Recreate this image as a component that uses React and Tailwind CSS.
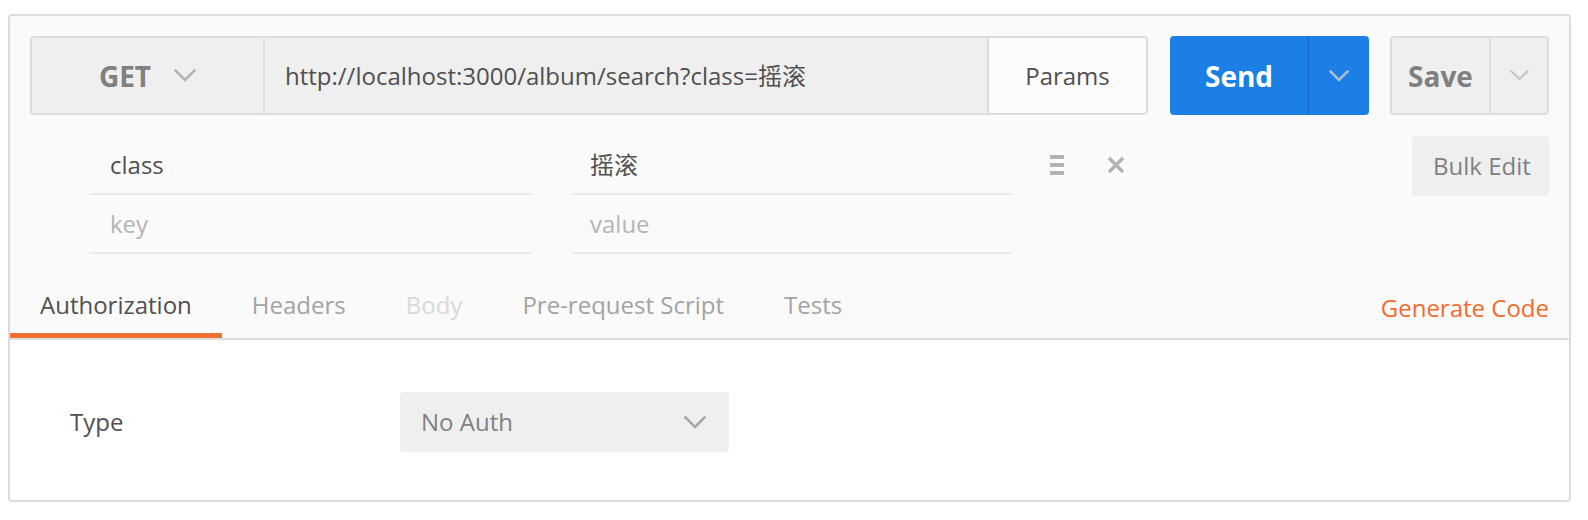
import React from 'react';

const Chevron = ({ className = '', color = '#b3b3b3', w = 22, h = 13, stroke = 2.5 }) => (
  <svg width={w} height={h} viewBox={`0 0 ${w} ${h}`} className={className} fill="none">
    <polyline
      points={`1.5,1.5 ${w / 2},${h - 2} ${w - 1.5},1.5`}
      stroke={color}
      strokeWidth={stroke}
      strokeLinecap="square"
      strokeLinejoin="miter"
    />
  </svg>
);

const tabs = [
  { label: 'Authorization', cls: 'text-[#505050] border-[#f2702f]' },
  { label: 'Headers', cls: 'text-[#a3a3a3] border-transparent' },
  { label: 'Body', cls: 'text-[#d9d9d9] border-transparent' },
  { label: 'Pre-request Script', cls: 'text-[#a3a3a3] border-transparent' },
  { label: 'Tests', cls: 'text-[#a3a3a3] border-transparent' },
];

const App = () => {
  return (
    <div className="w-[1588px] h-[520px] bg-white pt-[14px] pl-[8px] font-['Open_Sans','Noto_Sans_CJK_SC',sans-serif]">
      <div className="w-[1563px] h-[488px] border-2 border-[#dddddd] rounded-[4px] bg-[#fafafa] flex flex-col overflow-hidden">
        <div className="px-[20px] pt-[20px]">
          {/* request bar */}
          <div className="flex h-[79px]">
            <div className="flex w-[1118px] border-2 border-[#dddddd] rounded-[4px] bg-[#efefef] overflow-hidden">
              <div className="w-[233px] border-r-2 border-[#dddddd] flex items-center justify-center gap-[23px]">
                <span className="text-[28px] font-bold text-[#808080] leading-[32px]">GET</span>
                <Chevron />
              </div>
              <div className="flex-1 flex items-center pl-[20px] text-[24px] leading-[32px] text-[#505050]">
                http://localhost:3000/album/search?class=摇滚
              </div>
              <div className="w-[159px] border-l-2 border-[#dddddd] bg-[#fcfcfc] flex items-center justify-center text-[24px] leading-[32px] text-[#505050]">
                Params
              </div>
            </div>
            <div className="ml-[22px] w-[199px] rounded-[4px] bg-[#1c7fe6] flex">
              <div className="w-[138px] flex items-center justify-center text-[28px] font-bold text-white leading-[32px]">
                Send
              </div>
              <div className="flex-1 border-l border-[#1666bd] flex items-center justify-center">
                <Chevron color="#a9bfd6" w={20} h={12} />
              </div>
            </div>
            <div className="ml-[21px] w-[159px] border-2 border-[#dddddd] rounded-[4px] bg-[#efefef] flex">
              <div className="w-[97px] flex items-center justify-center text-[28px] font-bold text-[#808080] leading-[32px]">
                Save
              </div>
              <div className="flex-1 border-l-2 border-[#dddddd] flex items-center justify-center">
                <Chevron color="#c2c2c2" w={19} h={11} stroke={2} />
              </div>
            </div>
          </div>

          {/* params */}
          <div className="flex mt-[21px]">
            <div className="ml-[60px] flex flex-col">
              {[
                { k: 'class', v: '摇滚', ph: false },
                { k: 'key', v: 'value', ph: true },
              ].map((row) => (
                <div key={row.k} className="flex h-[59px]">
                  <div
                    className={`w-[442px] border-b-2 border-[#ebebeb] flex items-center pl-[20px] text-[24px] leading-[32px] ${
                      row.ph ? 'text-[#b5b5b5]' : 'text-[#505050]'
                    }`}
                  >
                    {row.k}
                  </div>
                  <div
                    className={`ml-[40px] w-[440px] border-b-2 border-[#ebebeb] flex items-center pl-[18px] text-[24px] leading-[32px] ${
                      row.ph ? 'text-[#b5b5b5]' : 'text-[#505050]'
                    }`}
                  >
                    {row.v}
                  </div>
                  {!row.ph && (
                    <div className="flex items-center h-[57px] ml-[38px]">
                      <svg width="14" height="20" viewBox="0 0 14 20">
                        <rect x="0" y="0" width="14" height="4" fill="#b3b3b3" />
                        <rect x="0" y="8" width="14" height="4" fill="#b3b3b3" />
                        <rect x="0" y="16" width="14" height="4" fill="#b3b3b3" />
                      </svg>
                      <svg width="18" height="18" viewBox="0 0 18 18" className="ml-[43px]">
                        <path d="M2 2 L16 16 M16 2 L2 16" stroke="#b3b3b3" strokeWidth="3.5" />
                      </svg>
                    </div>
                  )}
                </div>
              ))}
            </div>
            <div className="ml-auto w-[137px] h-[60px] rounded-[4px] bg-[#efefef] flex items-center pl-[21px] text-[24px] leading-[32px] text-[#808080]">
              Bulk Edit
            </div>
          </div>
        </div>

        {/* tabs */}
        <div className="flex items-end h-[86px] border-b-2 border-[#dddddd]">
          {tabs.map((t) => (
            <div
              key={t.label}
              className={`px-[30px] pb-[12px] border-b-[5px] text-[24px] leading-[32px] ${t.cls}`}
            >
              {t.label}
            </div>
          ))}
          <div className="ml-auto pr-[20px] pb-[14px] text-[24px] leading-[32px] text-[#f26b2f]">
            Generate Code
          </div>
        </div>

        {/* body */}
        <div className="flex-1 bg-white pt-[52px]">
          <div className="flex items-center pl-[60px]">
            <div className="w-[330px] text-[24px] leading-[32px] text-[#505050]">Type</div>
            <div className="w-[329px] h-[60px] rounded-[4px] bg-[#efefef] flex items-center justify-between pl-[21px] pr-[23px]">
              <span className="text-[24px] leading-[32px] text-[#808080]">No Auth</span>
              <Chevron color="#a6a6a6" />
            </div>
          </div>
        </div>
      </div>
    </div>
  );
};

export default App;
